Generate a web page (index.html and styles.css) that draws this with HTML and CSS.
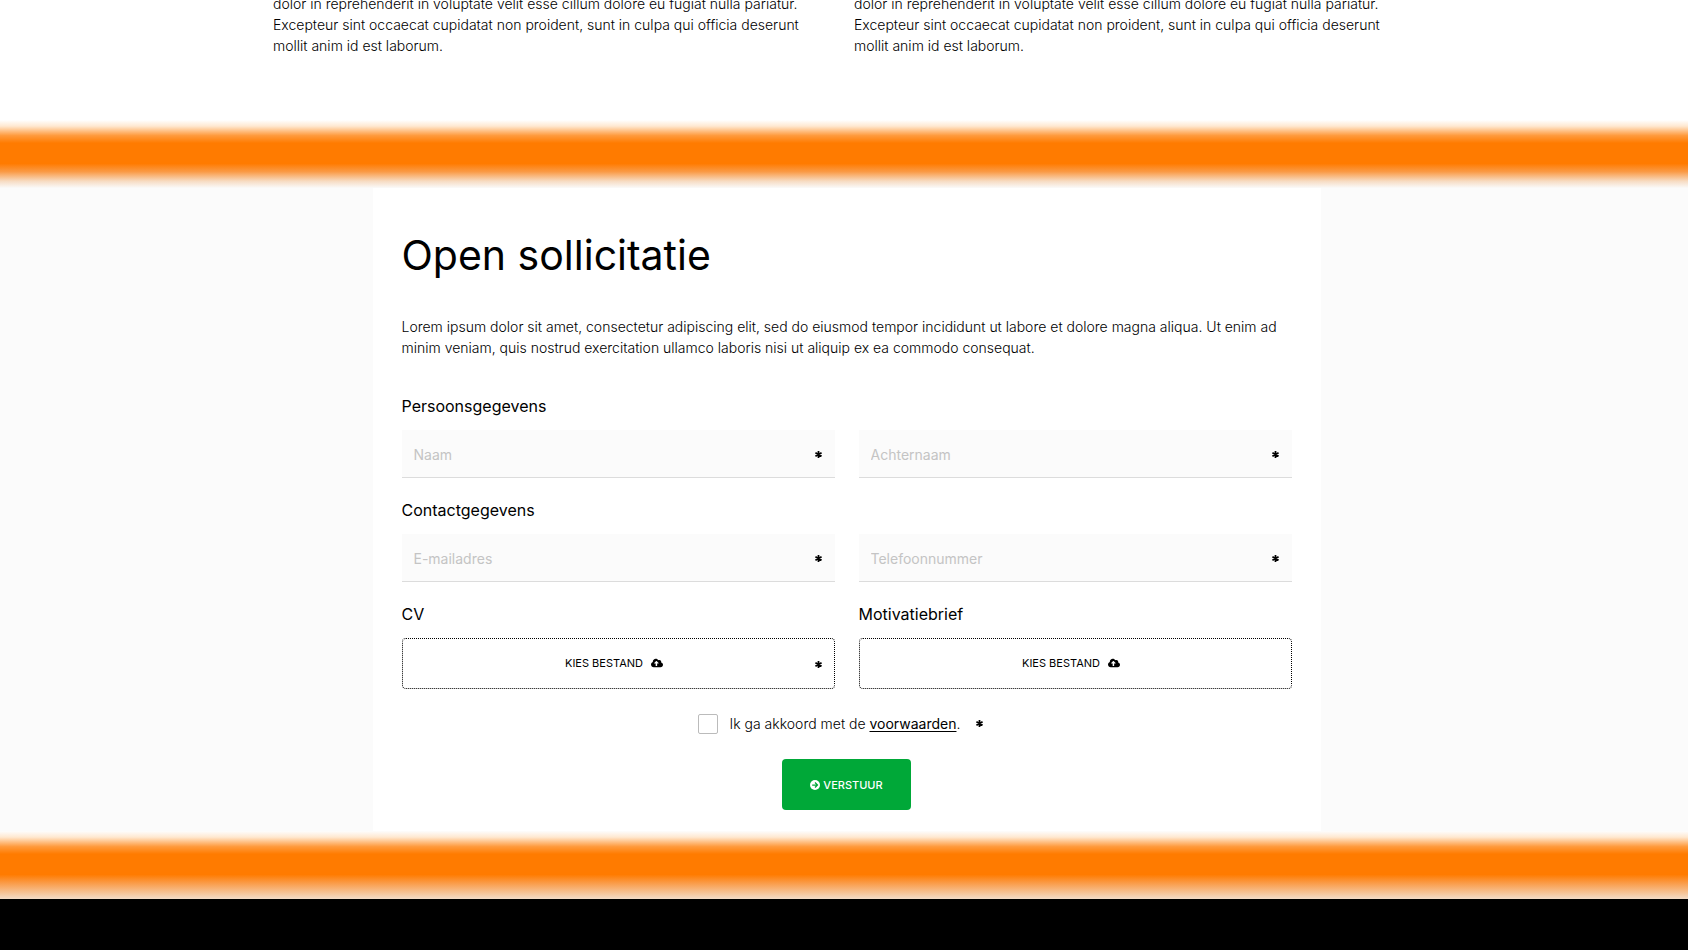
FILE: index.html
```html
<!DOCTYPE html>
<html lang="nl">
<head>
<meta charset="utf-8">
<meta name="viewport" content="width=device-width, initial-scale=1">
<title>Open sollicitatie</title>
<link rel="stylesheet" href="styles.css">
</head>
<body>
<svg class="sprite" aria-hidden="true">
  <symbol id="asterisk" viewBox="0 0 16 16"><path d="M8 0v16M1 4l14 8M15 4l-14 8" fill="none" stroke="currentColor" stroke-width="4"/></symbol>
  <symbol id="cloud" viewBox="0 0 640 512"><path fill="currentColor" d="M537.600 226.600c4.100-10.700 6.400-22.400 6.400-34.600 0-53-43-96-96-96-19.700 0-38.100 6-53.300 16.200C367 64.200 315.300 32 256 32c-88.400 0-160 71.600-160 160 0 2.700.1 5.400.2 8.100C40.200 219.800 0 273.200 0 336c0 79.500 64.500 144 144 144h368c70.700 0 128-57.300 128-128 0-61.900-44-113.600-102.400-125.400zM393.400 288H328v112c0 8.800-7.200 16-16 16h-48c-8.800 0-16-7.200-16-16V288h-65.400c-14.300 0-21.400-17.200-11.300-27.300l105.400-105.400c6.200-6.200 16.400-6.200 22.600 0l105.400 105.400c10.100 10.100 2.900 27.300-11.300 27.300z"/></symbol>
  <symbol id="arrow" viewBox="0 0 16 16"><circle cx="8" cy="8" r="8" fill="currentColor"/><path class="cut" d="M3.500 8h8M8 4l4 4-4 4" fill="none" stroke-width="2"/></symbol>
</svg>
<main class="page">
  <section class="intro">
    <p class="text">dolor in reprehenderit in voluptate velit esse cillum dolore eu fugiat nulla pariatur. Excepteur sint occaecat cupidatat non proident, sunt in culpa qui officia deserunt mollit anim id est laborum.</p>
    <p class="text">dolor in reprehenderit in voluptate velit esse cillum dolore eu fugiat nulla pariatur. Excepteur sint occaecat cupidatat non proident, sunt in culpa qui officia deserunt mollit anim id est laborum.</p>
  </section>
  <div class="band"></div>
  <section class="apply">
    <form class="card">
      <h1 class="title">Open sollicitatie</h1>
      <p class="text lead">Lorem ipsum dolor sit amet, consectetur adipiscing elit, sed do eiusmod tempor incididunt ut labore et dolore magna aliqua. Ut enim ad minim veniam, quis nostrud exercitation ullamco laboris nisi ut aliquip ex ea commodo consequat.</p>
      <h2 class="label">Persoonsgegevens</h2>
      <div class="row">
        <div class="field"><input class="input" type="text" placeholder="Naam" aria-label="Naam" required><svg class="star"><use href="#asterisk"/></svg></div>
        <div class="field"><input class="input" type="text" placeholder="Achternaam" aria-label="Achternaam" required><svg class="star"><use href="#asterisk"/></svg></div>
      </div>
      <h2 class="label">Contactgegevens</h2>
      <div class="row">
        <div class="field"><input class="input" type="email" placeholder="E-mailadres" aria-label="E-mailadres" required><svg class="star"><use href="#asterisk"/></svg></div>
        <div class="field"><input class="input" type="tel" placeholder="Telefoonnummer" aria-label="Telefoonnummer" required><svg class="star"><use href="#asterisk"/></svg></div>
      </div>
      <div class="row">
        <div>
          <h2 class="label" id="cv">CV</h2>
          <div class="field"><button class="file" type="button" aria-describedby="cv">KIES BESTAND <svg class="cloud"><use href="#cloud"/></svg></button><svg class="star"><use href="#asterisk"/></svg></div>
        </div>
        <div>
          <h2 class="label" id="letter">Motivatiebrief</h2>
          <div class="field"><button class="file" type="button" aria-describedby="letter">KIES BESTAND <svg class="cloud"><use href="#cloud"/></svg></button></div>
        </div>
      </div>
      <div class="terms">
        <input class="check" type="checkbox" id="terms" required>
        <label class="text" for="terms">Ik ga akkoord met de <a class="link" href="#">voorwaarden</a>.</label>
        <svg class="mark"><use href="#asterisk"/></svg>
      </div>
      <button class="submit" type="submit"><svg class="arrow"><use href="#arrow"/></svg>VERSTUUR</button>
    </form>
  </section>
  <div class="band band-end"></div>
</main>
<footer class="footer"></footer>
</body>
</html>
```
FILE: styles.css
```css
* { box-sizing: border-box; }
body {
  margin: 0;
  min-height: 100vh;
  display: flex;
  flex-direction: column;
  overflow: hidden;
  background: #fff;
  color: #000;
  font-family: Inter, "Open Sans", sans-serif;
  font-size: 14px;
}
button, input { font: inherit; color: inherit; }
.sprite { display: none; }
.text { margin: 0; font-size: 14px; line-height: 21px; font-weight: 300; }
.intro {
  max-width: 1142px;
  margin: 0 auto;
  padding: 0 0 64px;
  display: grid;
  grid-template-columns: 1fr 1fr;
  gap: 20px;
}
.intro .text { margin-top: -7px; padding-right: 16px; }
.band {
  height: 68px;
  background: linear-gradient(#fff, #ffe8d0 9%, #ff9a3c 23%, #ff7b00 34%, #ff7b00 64%, #fa9a45 76%, #f7dcc3 90%, #fafafa);
}
.apply { background: #fbfbfb; padding-left: 5px; }
.card {
  max-width: 948px;
  margin: 0 auto;
  padding: 40px 29px 21px;
  background: #fff;
  display: flex;
  flex-direction: column;
}
.title { margin: 0; font-size: 41px; line-height: 54px; font-weight: 400; }
.lead { margin: 34px 0 36px; }
.label { margin: 0 0 12px; font-size: 16px; line-height: 24px; font-weight: 400; }
.row { display: grid; grid-template-columns: 1fr 1fr; gap: 24px; margin-bottom: 20px; }
.field { position: relative; }
.input {
  display: block;
  width: 100%;
  height: 48px;
  padding: 2px 32px 0 12px;
  border: 0;
  border-bottom: 1px solid #dcdcdc;
  border-radius: 0;
  background: #fbfbfb;
}
.input::placeholder { color: #c4c4c4; opacity: 1; }
.star { position: absolute; right: 13px; top: 50%; width: 7px; height: 7px; margin-top: -3px; }
.mark { width: 7px; height: 7px; margin-left: 16px; }
.file {
  width: 100%;
  height: 51px;
  padding: 0 8px 2px 0;
  display: flex;
  align-items: center;
  justify-content: center;
  gap: 8px;
  border: 1px dotted #000;
  border-radius: 4px;
  background: #fff;
  font-size: 11px;
}
.cloud { width: 12px; height: 10px; }
.terms { display: flex; align-items: center; justify-content: center; margin: 4px 0 25px; padding-right: 12px; }
.check {
  appearance: none;
  width: 20px;
  height: 20px;
  margin: 0 12px 0 0;
  border: 1px solid #bbb;
  border-radius: 2px;
  background: #fff;
}
.link { color: inherit; font-weight: 400; text-underline-offset: 2px; }
.submit {
  align-self: center;
  height: 51px;
  padding: 0 28px;
  display: flex;
  align-items: center;
  gap: 3px;
  border: 0;
  border-radius: 4px;
  background: #00a838;
  color: #fff;
  font-size: 11px;
  font-weight: 500;
}
.arrow { width: 10px; height: 10px; }
.cut { stroke: #00a838; }
.band-end { background: linear-gradient(#fdfdfd, #ffe8d0 9%, #ff9a3c 23%, #ff7b00 34%, #ff7b00 64%, #fa9a45 76%, #f3dcc8); }
.footer { flex: 1; background: #000; }
```
